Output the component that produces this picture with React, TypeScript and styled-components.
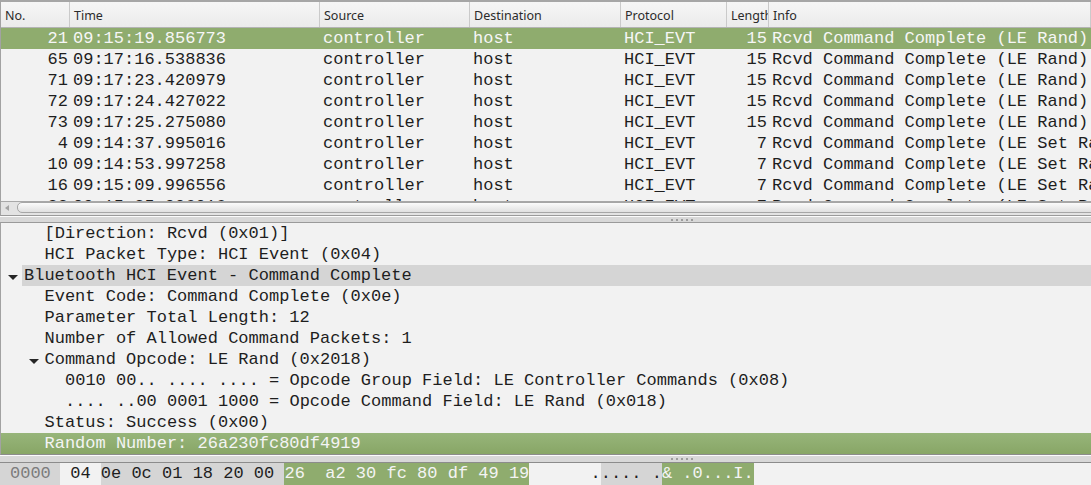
import React from "react";
import styled, { createGlobalStyle } from "styled-components";

const MONO = `"Liberation Mono", "DejaVu Sans Mono", monospace`;
const SANS = `"Noto Sans", "Open Sans", sans-serif`;

const GREEN = "#8fac6e";
const GRAY_HL = "#d5d5d5";
const BG = "#f2f2f2";

const GlobalStyle = createGlobalStyle`
  html, body {
    margin: 0;
    padding: 0;
    background: ${BG};
    overflow: hidden;
  }
`;

const COLUMNS = [
  { key: "no", label: "No.", width: 69, align: "right" },
  { key: "time", label: "Time", width: 250, align: "left" },
  { key: "src", label: "Source", width: 150, align: "left" },
  { key: "dst", label: "Destination", width: 151, align: "left" },
  { key: "proto", label: "Protocol", width: 106, align: "left" },
  { key: "len", label: "Length", width: 42, align: "right" },
  { key: "info", label: "Info", width: 0, align: "left" },
] as const;

type Packet = { no: number; time: string; len: number; info: string; selected?: boolean };

const RAND = "Rcvd Command Complete (LE Rand)";
const SETRAND = "Rcvd Command Complete (LE Set Random Address)";

const packets: Packet[] = [
  { no: 21, time: "09:15:19.856773", len: 15, info: RAND, selected: true },
  { no: 65, time: "09:17:16.538836", len: 15, info: RAND },
  { no: 71, time: "09:17:23.420979", len: 15, info: RAND },
  { no: 72, time: "09:17:24.427022", len: 15, info: RAND },
  { no: 73, time: "09:17:25.275080", len: 15, info: RAND },
  { no: 4, time: "09:14:37.995016", len: 7, info: SETRAND },
  { no: 10, time: "09:14:53.997258", len: 7, info: SETRAND },
  { no: 16, time: "09:15:09.996556", len: 7, info: SETRAND },
  { no: 22, time: "09:15:25.996916", len: 7, info: SETRAND },
];

type Detail = { level: number; text: string; open?: boolean; related?: boolean; selected?: boolean };

const details: Detail[] = [
  { level: 1, text: "[Direction: Rcvd (0x01)]" },
  { level: 1, text: "HCI Packet Type: HCI Event (0x04)" },
  { level: 0, text: "Bluetooth HCI Event - Command Complete", open: true, related: true },
  { level: 1, text: "Event Code: Command Complete (0x0e)" },
  { level: 1, text: "Parameter Total Length: 12" },
  { level: 1, text: "Number of Allowed Command Packets: 1" },
  { level: 1, text: "Command Opcode: LE Rand (0x2018)", open: true },
  { level: 2, text: "0010 00.. .... .... = Opcode Group Field: LE Controller Commands (0x08)" },
  { level: 2, text: ".... ..00 0001 1000 = Opcode Command Field: LE Rand (0x018)" },
  { level: 1, text: "Status: Success (0x00)" },
  { level: 1, text: "Random Number: 26a230fc80df4919", selected: true },
];

const Window = styled.div`
  width: 100%;
  height: 485px;
  display: flex;
  flex-direction: column;
  background: ${BG};
  overflow: hidden;
  font-family: ${MONO};
`;

const PacketPane = styled.section`
  height: 216px;
  flex: none;
  display: flex;
  flex-direction: column;
  box-sizing: border-box;
  border-top: 2px solid #a6a6a6;
  border-bottom: 1px solid #9a9a9a;
  border-left: 1px solid #a2a2a2;
  overflow: hidden;
`;

const HeaderRow = styled.div`
  display: flex;
  height: 26px;
  flex: none;
  box-sizing: border-box;
  border-bottom: 1px solid #b4b4b4;
  background: linear-gradient(#f6f6f6, #ebebeb);
`;

const HeaderCell = styled.div<{ $width: number }>`
  flex: ${({ $width }) => ($width ? `0 0 ${$width}px` : "1 1 auto")};
  box-sizing: border-box;
  border-right: 1px solid #cacaca;
  padding: 2px 4px 0 4px;
  font-family: ${SANS};
  font-size: 12.5px;
  line-height: 23px;
  color: #2b2b2b;
  white-space: nowrap;
  overflow: hidden;
`;

const ListBody = styled.div`
  flex: 1;
  overflow: hidden;
`;

const PacketRow = styled.div<{ $selected?: boolean }>`
  display: flex;
  height: 21px;
  background: ${({ $selected }) => ($selected ? GREEN : "transparent")};
  color: ${({ $selected }) => ($selected ? "#f6f6f6" : "#1e1e1e")};
`;

const Cell = styled.div<{ $width: number; $align: string }>`
  flex: ${({ $width }) => ($width ? `0 0 ${$width}px` : "1 1 auto")};
  box-sizing: border-box;
  padding: ${({ $align }) => ($align === "right" ? "0 2px 0 0" : "0 0 0 3px")};
  text-align: ${({ $align }) => $align};
  font-size: 17px;
  line-height: 21px;
  white-space: pre;
  overflow: hidden;
`;

const HScroll = styled.div`
  height: 14px;
  flex: none;
  box-sizing: border-box;
  border-top: 1px solid #a8a8a8;
  background: #e3e3e3;
  display: flex;
  align-items: flex-start;
`;

const ScrollArrow = styled.div`
  width: 0;
  height: 0;
  margin: 3px 6px 0 4px;
  border-top: 3px solid transparent;
  border-bottom: 3px solid transparent;
  border-right: 4px solid #a4a4a4;
`;

const ScrollHandle = styled.div`
  flex: 1;
  height: 11px;
  margin-left: 2px;
  margin-right: -20px;
  box-sizing: border-box;
  border: 1px solid #a6a6a6;
  border-radius: 5px;
  background: linear-gradient(#fbfbfb, #e0e0e0);
`;

const Splitter = styled.div<{ $height: number }>`
  height: ${({ $height }) => $height}px;
  flex: none;
  box-sizing: border-box;
  border-top: 1px solid #fbfbfb;
  background: #d8d8d8;
  display: flex;
  align-items: center;
  padding-left: 671px;
  gap: 3px;
`;

const Grip = styled.span`
  width: 2px;
  height: 2px;
  background: #9c9c9c;
`;

const DetailsPane = styled.section`
  height: 233px;
  flex: none;
  box-sizing: border-box;
  border-top: 1px solid #9a9a9a;
  border-bottom: 1px solid #8c8c8c;
  border-left: 1px solid #a2a2a2;
  overflow: hidden;
`;

const DetailRow = styled.div<{ $selected?: boolean; $level: number }>`
  display: flex;
  height: 21px;
  padding-left: ${({ $level }) => 3 + $level * 20.5}px;
  background: ${({ $selected }) =>
    $selected ? `linear-gradient(#97b57a, #88a666)` : "transparent"};
  color: ${({ $selected }) => ($selected ? "#f4f4f4" : "#1e1e1e")};
`;

const Expander = styled.div`
  flex: 0 0 18px;
  display: flex;
  align-items: center;
`;

const Triangle = styled.span`
  width: 0;
  height: 0;
  margin-left: 4px;
  margin-top: 3px;
  border-left: 5px solid transparent;
  border-right: 5px solid transparent;
  border-top: 5px solid #262626;
`;

const DetailText = styled.div<{ $related?: boolean }>`
  flex: 1;
  padding-left: 2px;
  background: ${({ $related }) => ($related ? GRAY_HL : "transparent")};
  font-size: 17px;
  line-height: 22px;
  white-space: pre;
  overflow: hidden;
`;

const HexPane = styled.section`
  flex: 1;
  box-sizing: border-box;
  border-top: 1px solid #8c8c8c;
  overflow: hidden;
`;

const HexLine = styled.div`
  display: flex;
  height: 22px;
  font-size: 17px;
  line-height: 21px;
  white-space: pre;
  color: #1e1e1e;
`;

const Offset = styled.span`
  flex: 0 0 60px;
  box-sizing: border-box;
  padding-left: 10px;
  background: ${GRAY_HL};
  color: #7c7c7c;
`;

const Chunk = styled.span<{ $tone?: "related" | "selected" }>`
  background: ${({ $tone }) =>
    $tone === "selected" ? GREEN : $tone === "related" ? GRAY_HL : "transparent"};
  color: ${({ $tone }) => ($tone === "selected" ? "#f4f4f4" : "#1e1e1e")};
`;

export default function App() {
  return (
    <>
      <GlobalStyle />
      <Window>
        <PacketPane>
          <HeaderRow>
            {COLUMNS.map((c) => (
              <HeaderCell key={c.key} $width={c.width}>
                {c.label}
              </HeaderCell>
            ))}
          </HeaderRow>
          <ListBody>
            {packets.map((p) => {
              const values: Record<string, string> = {
                no: String(p.no),
                time: p.time,
                src: "controller",
                dst: "host",
                proto: "HCI_EVT",
                len: String(p.len),
                info: p.info,
              };
              return (
                <PacketRow key={p.no} $selected={p.selected}>
                  {COLUMNS.map((c) => (
                    <Cell key={c.key} $width={c.width} $align={c.align}>
                      {values[c.key]}
                    </Cell>
                  ))}
                </PacketRow>
              );
            })}
          </ListBody>
          <HScroll>
            <ScrollArrow />
            <ScrollHandle />
          </HScroll>
        </PacketPane>

        <Splitter $height={6}>
          {[0, 1, 2, 3, 4].map((i) => (
            <Grip key={i} />
          ))}
        </Splitter>

        <DetailsPane>
          {details.map((d, i) => (
            <DetailRow key={i} $level={d.level} $selected={d.selected}>
              <Expander>{d.open && <Triangle />}</Expander>
              <DetailText $related={d.related}>{d.text}</DetailText>
            </DetailRow>
          ))}
        </DetailsPane>

        <Splitter $height={7}>
          {[0, 1, 2, 3, 4].map((i) => (
            <Grip key={i} />
          ))}
        </Splitter>

        <HexPane>
          <HexLine>
            <Offset>0000</Offset>
            <Chunk>{" 04 "}</Chunk>
            <Chunk $tone="related">{"0e 0c 01 18 20 00 "}</Chunk>
            <Chunk $tone="selected">{"26  a2 30 fc 80 df 49 19"}</Chunk>
            <Chunk>{"      ."}</Chunk>
            <Chunk $tone="related">{".... ."}</Chunk>
            <Chunk $tone="selected">{"& .0...I."}</Chunk>
          </HexLine>
        </HexPane>
      </Window>
    </>
  );
}
